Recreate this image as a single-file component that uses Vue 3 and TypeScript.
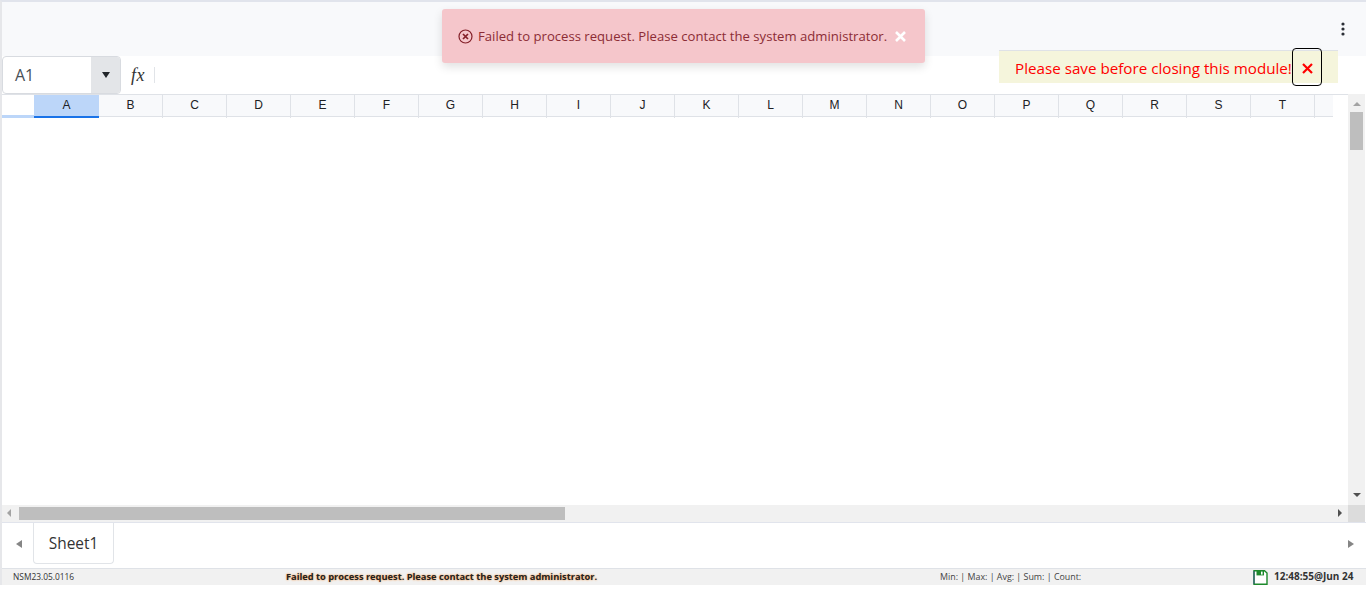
<script setup lang="ts">
const columns = 'ABCDEFGHIJKLMNOPQRST'.split('')
const errorText = 'Failed to process request. Please contact the system administrator.'
</script>

<template>
  <div class="page">
    <header class="toolbar">
      <svg class="more" width="4" height="14" viewBox="0 0 4 14">
        <circle cx="2" cy="2" r="1.6" />
        <circle cx="2" cy="7" r="1.6" />
        <circle cx="2" cy="12" r="1.6" />
      </svg>
    </header>

    <div class="formula-row">
      <div class="name-box">
        <span class="name-value">A1</span>
        <span class="name-drop"><i class="tri-down"></i></span>
      </div>
      <span class="fx">fx</span>
      <span class="fx-sep"></span>
    </div>

    <div class="sheet">
      <div class="grid-area">
        <div class="col-headers">
          <div class="corner"></div>
          <div v-for="(c, i) in columns" :key="c" class="col" :class="{ active: i === 0 }">{{ c }}</div>
          <div class="col stub"></div>
        </div>
        <div class="cells"></div>
      </div>
      <div class="vscroll">
        <i class="arrow up"></i>
        <div class="vthumb"></div>
        <i class="arrow down"></i>
      </div>
    </div>

    <div class="hscroll">
      <div class="htrack">
        <i class="arrow left"></i>
        <div class="hthumb"></div>
        <i class="arrow right"></i>
      </div>
      <div class="scroll-corner"></div>
    </div>

    <div class="tabs">
      <i class="tab-arrow left"></i>
      <div class="tab">Sheet1</div>
      <i class="tab-arrow right"></i>
    </div>

    <footer class="status">
      <span class="version">NSM23.05.0116</span>
      <span class="status-msg">{{ errorText }}</span>
      <span class="stats">Min: | Max: | Avg: | Sum: | Count:</span>
      <svg class="save" width="15" height="15" viewBox="0 0 15 15">
        <path d="M1 .7h10.5L14 3v11.3H1z" fill="#fff" stroke="#1d8a2c" stroke-width="1.4" />
        <rect x="3.5" y="1" width="7.5" height="4.4" fill="#1d8a2c" />
        <rect x="8" y="1.6" width="1.6" height="3" fill="#fff" />
        <path d="M1 1v13" stroke="#2f4f7f" stroke-width="1" />
      </svg>
      <span class="clock">12:48:55@Jun 24</span>
    </footer>

    <div class="toast">
      <svg class="toast-icon" width="15" height="15" viewBox="0 0 15 15" fill="none" stroke="#842029">
        <circle cx="7.5" cy="7.5" r="6.5" stroke-width="1.2" />
        <path d="M5 5l5 5M10 5l-5 5" stroke-width="1.7" />
      </svg>
      <span class="toast-text">{{ errorText }}</span>
      <svg class="toast-close" width="11" height="11" viewBox="0 0 11 11">
        <path d="M1 1l9 9M10 1l-9 9" stroke="#fff" stroke-width="2.6" />
      </svg>
    </div>

    <div class="save-note">
      <span class="save-text">Please save before closing this module!</span>
      <button class="save-close">
        <svg width="11" height="11" viewBox="0 0 11 11">
          <path d="M1 1l9 9M10 1l-9 9" stroke="#f00" stroke-width="2.2" />
        </svg>
      </button>
    </div>
  </div>
</template>

<style>
html, body { margin: 0; background: #fff; }
</style>

<style scoped>
.page {
  position: relative;
  width: 1366px;
  height: 585px;
  box-sizing: border-box;
  display: flex;
  flex-direction: column;
  border-top: 2px solid #e1e4ec;
  border-left: 2px solid #e6e7ea;
  font-family: "Open Sans", "Noto Sans", sans-serif;
  overflow: hidden;
}
.toolbar {
  height: 54px;
  flex: none;
  background: #f8f9fb;
  display: flex;
  align-items: center;
  justify-content: flex-end;
  padding: 0 20px 0 0;
  box-sizing: border-box;
}
.more { fill: #2b2f36; margin-right: 1px; }
.formula-row {
  height: 38px;
  flex: none;
  display: flex;
  align-items: center;
  box-sizing: border-box;
  background: #fff;
}
.name-box {
  width: 119px;
  height: 38px;
  box-sizing: border-box;
  border: 1px solid #d8dbe0;
  border-radius: 4px;
  display: flex;
  overflow: hidden;
}
.name-value {
  flex: 1;
  padding-left: 12px;
  line-height: 36px;
  font-size: 16px;
  color: #495057;
}
.name-drop {
  width: 29px;
  background: #e3e5e8;
  display: flex;
  align-items: center;
  justify-content: center;
}
.tri-down {
  width: 0;
  height: 0;
  border-left: 4px solid transparent;
  border-right: 4px solid transparent;
  border-top: 6px solid #212529;
}
.fx {
  margin-left: 10px;
  width: 23px;
  font-family: "Liberation Serif", serif;
  font-style: italic;
  font-size: 18px;
  letter-spacing: 0.5px;
  color: #333;
}
.fx-sep {
  width: 1px;
  height: 16px;
  background: #e1e4e8;
}
.sheet {
  flex: none;
  height: 411px;
  display: flex;
}
.grid-area {
  flex: 1;
  display: flex;
  flex-direction: column;
  border-top: 1px solid #dfe2e7;
  box-sizing: border-box;
}
.col-headers {
  display: flex;
  align-items: flex-start;
  height: 23px;
  flex: none;
}
.corner {
  width: 32px;
  height: 23px;
  box-sizing: border-box;
  border-bottom: 3px solid #bcd6f9;
  flex: none;
}
.col {
  position: relative;
  width: 64px;
  height: 22px;
  flex: none;
  box-sizing: border-box;
  text-align: center;
  background: #f8f9fb;
  border-right: 1px solid #dfe2e7;
  border-bottom: 1px solid #dfe2e7;
  font: 12px/21px "Liberation Sans", Arial, sans-serif;
  color: #202124;
}
.col::after {
  content: "";
  position: absolute;
  right: -1px;
  top: 21px;
  width: 1px;
  height: 2px;
  background: #dfe2e7;
}
.col.active {
  width: 65px;
  height: 23px;
  background: #bcd6f9;
  border-right: none;
  border-bottom: 2px solid #1a73e8;
}
.col.active::after {
  display: none;
}
.col.stub {
  width: 18px;
  border-right: none;
}
.col.stub::after {
  display: none;
}
.cells { flex: 1; background: #fff; }
.vscroll {
  width: 17px;
  flex: none;
  margin-right: 1px;
  background: #f1f1f1;
  display: flex;
  flex-direction: column;
  align-items: center;
  position: relative;
}
.vthumb {
  position: absolute;
  top: 18px;
  left: 2px;
  width: 13px;
  height: 38px;
  background: #bebebe;
}
.arrow {
  position: absolute;
  width: 0;
  height: 0;
}
.arrow.up {
  top: 8px;
  left: 5px;
  border-left: 4px solid transparent;
  border-right: 4px solid transparent;
  border-bottom: 4px solid #a3a3a3;
}
.arrow.down {
  bottom: 8px;
  left: 5px;
  border-left: 4px solid transparent;
  border-right: 4px solid transparent;
  border-top: 4px solid #505050;
}
.hscroll {
  flex: none;
  height: 17px;
  display: flex;
  border-bottom: 1px solid #e1e4ec;
}
.htrack {
  flex: 1;
  position: relative;
  background: #f1f1f1;
}
.hthumb {
  position: absolute;
  top: 2px;
  left: 17px;
  width: 546px;
  height: 13px;
  background: #bebebe;
}
.arrow.left {
  top: 4px;
  left: 5px;
  border-top: 4px solid transparent;
  border-bottom: 4px solid transparent;
  border-right: 4px solid #a3a3a3;
}
.arrow.right {
  top: 4px;
  right: 6px;
  border-top: 4px solid transparent;
  border-bottom: 4px solid transparent;
  border-left: 4px solid #505050;
}
.scroll-corner {
  width: 17px;
  margin-right: 1px;
  background: #dcdcdc;
}
.tabs {
  flex: none;
  height: 46px;
  box-sizing: border-box;
  display: flex;
  align-items: flex-start;
  background: #fff;
  border-bottom: 1px solid #dfe2e7;
  position: relative;
}
.tab {
  margin-left: 31px;
  width: 81px;
  height: 41px;
  box-sizing: border-box;
  border: 1px solid #e1e4e8;
  border-top: none;
  border-radius: 0 0 4px 4px;
  text-align: center;
  font-size: 15.4px;
  line-height: 41px;
  color: #333;
}
.tab-arrow {
  position: absolute;
  top: 17px;
  width: 0;
  height: 0;
  border-top: 4px solid transparent;
  border-bottom: 4px solid transparent;
}
.tab-arrow.left {
  left: 14px;
  border-right: 6px solid #858585;
}
.tab-arrow.right {
  right: 12px;
  border-left: 6px solid #858585;
}
.status {
  flex: none;
  height: 16px;
  display: flex;
  align-items: center;
  background: #f1f1f1;
  font-size: 9px;
  color: #333;
  position: relative;
}
.version, .status-msg, .stats, .clock {
  margin-top: -2px;
}
.version {
  margin-left: 11px;
  width: 273px;
  flex: none;
  font-size: 8.4px;
}
.status-msg {
  width: 654px;
  flex: none;
  font-size: 9.27px;
  font-weight: 700;
  color: #222;
  text-shadow: 0 0 2px #f58220;
}
.stats {
  width: 313px;
  flex: none;
  font-size: 8.9px;
  color: #444;
}
.save { flex: none; margin-top: 1px; }
.clock {
  margin-left: 6px;
  font-size: 10px;
  font-weight: 700;
  color: #333;
  white-space: nowrap;
}
.toast {
  position: absolute;
  left: 440px;
  top: 7px;
  width: 483px;
  height: 54px;
  box-sizing: border-box;
  display: flex;
  align-items: center;
  padding-left: 16px;
  background: #f5c6cb;
  border-radius: 3px;
  box-shadow: 0 4px 10px rgba(0, 0, 0, 0.12);
}
.toast-icon { flex: none; }
.toast-text {
  margin-left: 5px;
  font-size: 13.13px;
  color: #842029;
  white-space: nowrap;
  opacity: 0.92;
}
.toast-close { margin-left: 8px; flex: none; }
.save-note {
  position: absolute;
  left: 997px;
  top: 48px;
  width: 339px;
  height: 33px;
  box-sizing: border-box;
  border-top: 1px solid #dfe2e7;
  background: #f5f5dc;
  display: flex;
  align-items: center;
  padding: 1px 0 0 16px;
}
.save-text {
  font-size: 15.2px;
  color: #f00;
  white-space: nowrap;
}
.save-close {
  position: absolute;
  left: 293px;
  top: -3px;
  width: 30px;
  height: 38px;
  padding: 2px 0 0;
  box-sizing: border-box;
  border: 1px solid #000;
  border-radius: 4px;
  background: transparent;
  display: flex;
  align-items: center;
  justify-content: center;
}
</style>
